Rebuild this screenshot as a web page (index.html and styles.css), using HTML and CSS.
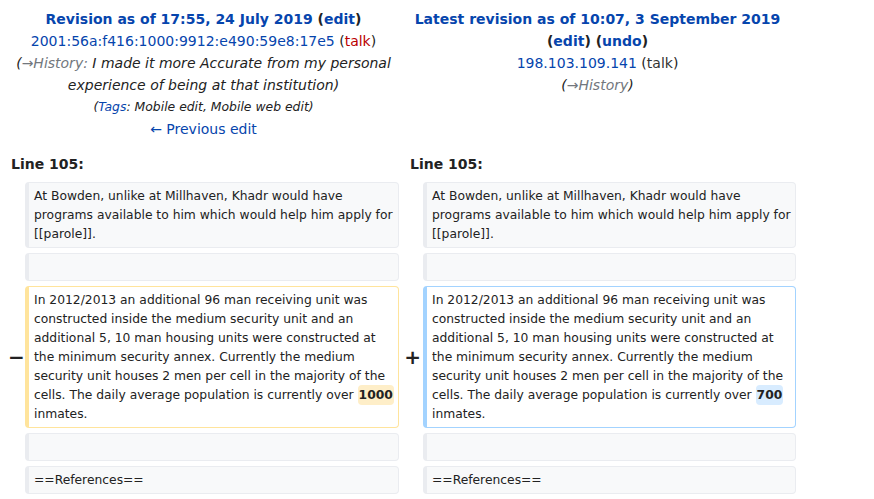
FILE: index.html
```html
<!DOCTYPE html>
<html lang="en">
<head>
<meta charset="utf-8">
<title>Difference between revisions</title>
<link rel="stylesheet" href="styles.css">
</head>
<body>
<div class="diff">
  <div class="diff-title">
    <div class="t-line t-bold"><a class="link" href="#">Revision as of 17:55, 24 July 2019</a> (<a class="link" href="#">edit</a>)</div>
    <div class="t-line"><a class="link" href="#">2001:56a:f416:1000:9912:e490:59e8:17e5</a> (<a class="redlink" href="#">talk</a>)</div>
    <div class="t-line t-comment">(<a class="autocomment" href="#">→History:</a> I made it more Accurate from my personal experience of being at that institution)</div>
    <div class="t-line t-tags">(<a class="link" href="#">Tags</a>: Mobile edit, Mobile web edit)</div>
    <div class="t-line"><a class="link" href="#">← Previous edit</a></div>
  </div>
  <div class="diff-title">
    <div class="t-line t-bold"><a class="link" href="#">Latest revision as of 10:07, 3 September 2019</a> (<a class="link" href="#">edit</a>) (<a class="link" href="#">undo</a>)</div>
    <div class="t-line"><a class="link" href="#">198.103.109.141</a> (<a class="visited" href="#">talk</a>)</div>
    <div class="t-line t-comment">(<a class="autocomment" href="#">→History</a>)</div>
  </div>

  <div class="lineno lineno-left">Line 105:</div>
  <div class="lineno lineno-right">Line 105:</div>

  <div class="marker"></div>
  <div class="line context">At Bowden, unlike at Millhaven, Khadr would have programs available to him which would help him apply for [[parole]].</div>
  <div class="marker"></div>
  <div class="line context">At Bowden, unlike at Millhaven, Khadr would have programs available to him which would help him apply for [[parole]].</div>

  <div class="marker"></div>
  <div class="line context empty">&nbsp;</div>
  <div class="marker"></div>
  <div class="line context empty">&nbsp;</div>

  <div class="marker marker-left">−</div>
  <div class="line deleted">In 2012/2013 an additional 96 man receiving unit was constructed inside the medium security unit and an additional 5, 10 man housing units were constructed at the minimum security annex. Currently the medium security unit houses 2 men per cell in the majority of the cells. The daily average population is currently over <span class="change">1000</span> inmates.</div>
  <div class="marker marker-right">+</div>
  <div class="line added">In 2012/2013 an additional 96 man receiving unit was constructed inside the medium security unit and an additional 5, 10 man housing units were constructed at the minimum security annex. Currently the medium security unit houses 2 men per cell in the majority of the cells. The daily average population is currently over <span class="change">700</span> inmates.</div>

  <div class="marker"></div>
  <div class="line context empty">&nbsp;</div>
  <div class="marker"></div>
  <div class="line context empty">&nbsp;</div>

  <div class="marker"></div>
  <div class="line context">==References==</div>
  <div class="marker"></div>
  <div class="line context">==References==</div>
</div>
</body>
</html>
```

FILE: styles.css
```css
html, body {
  margin: 0;
  padding: 0;
  background: #ffffff;
}

body {
  padding: 8px;
  font-family: "DejaVu Sans", sans-serif;
  color: #222222;
  font-size: 14px;
}

a {
  text-decoration: none;
}

.link {
  color: #0645ad;
}

.redlink {
  color: #ba0000;
}

.visited {
  color: #333333;
}

.autocomment {
  color: #72777d;
}

.diff {
  display: grid;
  grid-template-columns: 17px 374px 24px 373px;
  row-gap: 5px;
  width: 788px;
}

.diff-title {
  grid-column: span 2;
  text-align: center;
  line-height: 22px;
  font-size: 14px;
  color: #222222;
}

.t-bold {
  font-weight: bold;
}

.t-comment {
  font-style: italic;
  color: #222222;
}

.t-tags {
  font-style: italic;
  font-size: 12.4px;
}

.lineno {
  grid-column: span 2;
  font-weight: bold;
  font-size: 14px;
  line-height: 22px;
  margin-top: 8px;
  margin-bottom: 2px;
  color: #222222;
}

.lineno-left {
  padding-left: 3px;
}

.lineno-right {
  padding-left: 11px;
}

.marker {
  align-self: center;
  text-align: right;
  font-weight: bold;
  font-size: 20px;
  line-height: 1;
  color: #222222;
}

.marker-left {
  padding-right: 4px;
}

.marker-right {
  padding-right: 2px;
}

.line {
  font-size: 12.32px;
  line-height: 19px;
  padding: 4px 0 3px 5px;
  border: 1px solid #eaecf0;
  border-left-width: 4px;
  border-radius: 4px;
  color: #222222;
  word-wrap: break-word;
}

.context {
  background: #f8f9fa;
}

.deleted {
  background: #ffffff;
  border-color: #ffe49c;
}

.added {
  background: #ffffff;
  border-color: #a3d3ff;
}

.change {
  font-weight: bold;
  border-radius: 4px;
  padding: 3px 1px;
}

.deleted .change {
  background: #feeec8;
}

.added .change {
  background: #d8ecff;
}
```
